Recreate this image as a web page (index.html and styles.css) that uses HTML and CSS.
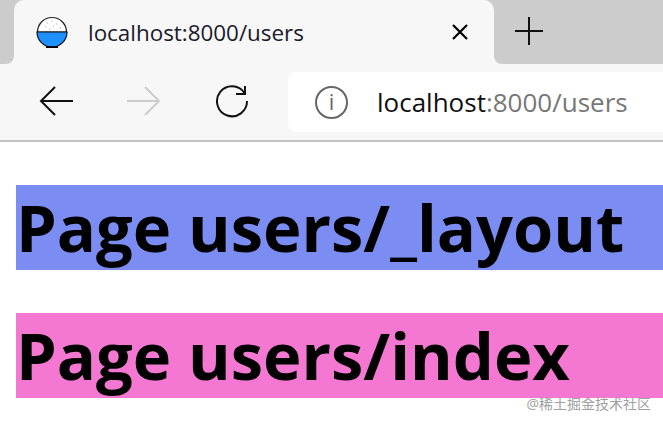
FILE: index.html
```html
<!DOCTYPE html>
<html lang="en">

<head>
    <meta charset="UTF-8">
    <title>localhost:8000/users</title>
    <link rel="stylesheet" href="styles.css">
</head>

<body>
    <div class="tabstrip">
        <div class="strip_left"></div>
        <div class="tab">
            <svg class="favicon" width="32" height="32" viewBox="0 0 32 32">
                <path d="M1.5 16A14.5 14.5 0 0 1 30.5 16Z" fill="#fff" stroke="#222" stroke-width="1.2" />
                <path d="M1 16H31A15 15 0 0 1 1 16Z" fill="#1e90ff" stroke="#111" stroke-width="1.2" />
                <path d="M10 31H22" stroke="#000" stroke-width="2" />
                <path d="M11 7h1M15 5h1M20 8h1M9 11h1M17 10h1M24 12h1M13 13h1" stroke="#aaa" stroke-width="1" />
            </svg>
            <span class="tab_title">localhost:8000/users</span>
            <svg class="tab_close" width="18" height="18" viewBox="0 0 18 18">
                <path d="M2 2L16 16M16 2L2 16" stroke="#000" stroke-width="2.2" fill="none" />
            </svg>
        </div>
        <div class="strip_right">
            <svg width="30" height="30" viewBox="0 0 30 30">
                <path d="M15 1V29M1 15H29" stroke="#111" stroke-width="2" fill="none" />
            </svg>
        </div>
    </div>
    <div class="toolbar">
        <div class="nav">
            <svg width="36" height="32" viewBox="0 0 36 32">
                <path d="M35 16H3M17 2L3 16L17 30" stroke="#111" stroke-width="2" fill="none" />
            </svg>
            <svg width="36" height="32" viewBox="0 0 36 32">
                <path d="M1 16H33M19 2L33 16L19 30" stroke="#ccc" stroke-width="2" fill="none" />
            </svg>
            <svg width="36" height="34" viewBox="0 0 36 34">
                <path d="M30.500 9A15 15 0 1 0 33 17" stroke="#111" stroke-width="2" fill="none" />
                <path d="M31 2V10H22" stroke="#111" stroke-width="2" fill="none" />
            </svg>
        </div>
        <div class="address">
            <span class="info">i</span>
            <span class="url">localhost<span class="url_rest">:8000/users</span></span>
        </div>
    </div>
    <div class="page">
        <h1 class="layout_title">Page users/_layout</h1>
        <h1 class="index_title">Page users/index</h1>
    </div>
    <div class="watermark">@稀土掘金技术社区</div>
</body>

</html>
```

FILE: styles.css
```css
* {
    padding: 0;
    margin: 0;
    box-sizing: border-box;
}

body {
    font-family: "Open Sans", "Noto Sans", "Noto Sans CJK SC", sans-serif;
    background: #fff;
    height: 424px;
    overflow: hidden;
}

.tabstrip {
    height: 64px;
    display: flex;
    background: linear-gradient(#ccc 50%, #f7f7f7 50%);
}

.strip_left {
    width: 14px;
    background: #ccc;
    border-bottom-right-radius: 8px;
}

.tab {
    width: 480px;
    display: flex;
    align-items: center;
    padding: 0 25px 0 22px;
    background: #f7f7f7;
    border-radius: 10px 10px 0 0;
}

.favicon {
    flex: none;
}

.tab_title {
    margin-left: 20px;
    font-size: 22.400px;
    color: #1a1a2a;
    flex: 1;
}

.strip_right {
    flex: 1;
    background: #ccc;
    border-bottom-left-radius: 8px;
    display: flex;
    align-items: center;
    padding: 0 0 2px 20px;
}

.toolbar {
    height: 78px;
    background: #f7f7f7;
    border-bottom: 2px solid #c4c4c4;
    display: flex;
    align-items: center;
    padding-left: 38px;
    gap: 38px;
}

.nav {
    display: flex;
    align-items: center;
    gap: 52px;
    margin-bottom: 2px;
}

.address {
    flex: 1;
    height: 60px;
    background: #fff;
    border-radius: 8px 0 0 8px;
    display: flex;
    align-items: center;
    padding-left: 27px;
}

.info {
    width: 33px;
    height: 33px;
    border: 2px solid #666;
    border-radius: 50%;
    color: #666;
    font-size: 22px;
    line-height: 27px;
    text-align: center;
}

.url {
    margin-left: 29px;
    font-size: 26px;
    color: #111;
}

.url_rest {
    color: #777;
}

.page {
    padding: 43px 0 0 16px;
}

.page h1 {
    height: 85px;
    font-size: 65px;
    line-height: 85px;
    font-weight: 700;
    color: #000;
    white-space: nowrap;
}

.layout_title {
    background: #7b8cf2;
    margin-bottom: 43px;
}

.index_title {
    background: #f478d2;
}

.watermark {
    position: absolute;
    right: 12px;
    top: 393px;
    font-size: 14px;
    color: #a0a0a0;
}
```
